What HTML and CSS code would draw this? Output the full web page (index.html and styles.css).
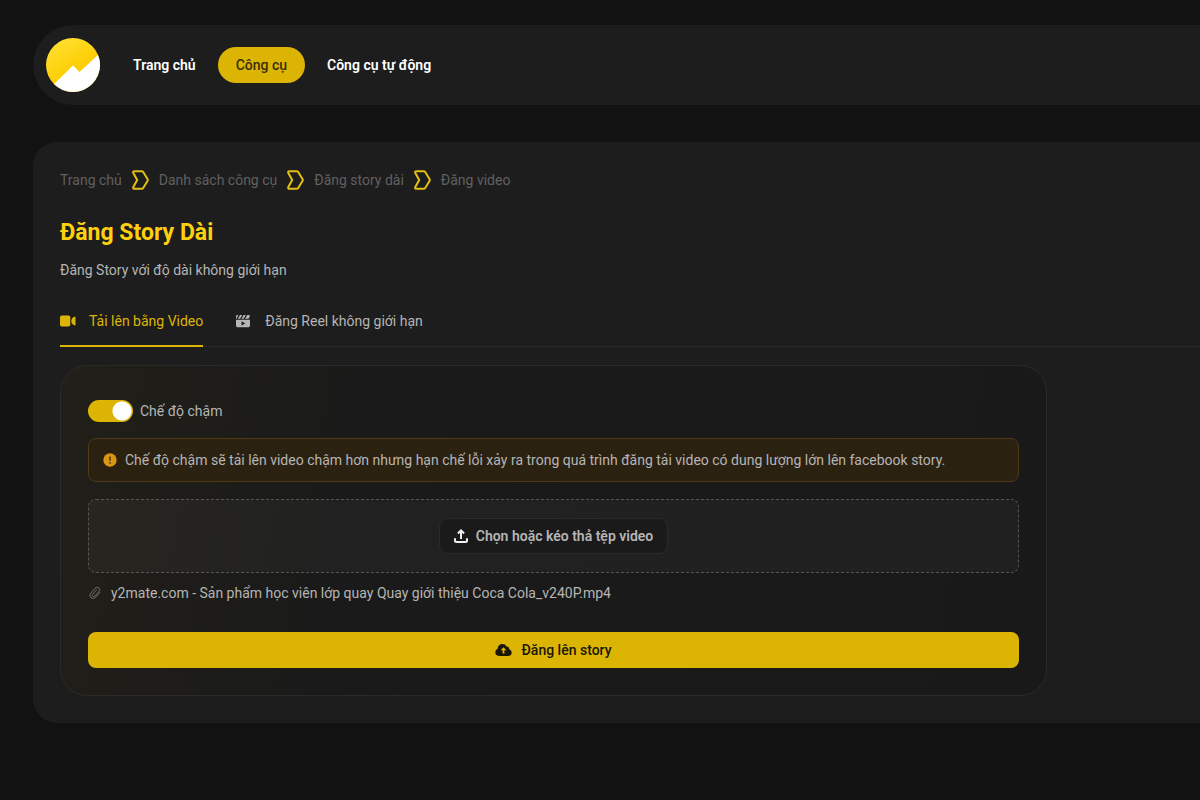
FILE: index.html
```html
<!DOCTYPE html>
<html lang="vi">
<head>
<meta charset="utf-8">
<meta name="viewport" content="width=device-width, initial-scale=1">
<title>Đăng Story Dài</title>
<link rel="stylesheet" href="styles.css">
</head>
<body>
<header class="header">
  <a class="logo" href="#" aria-label="Logo">
    <svg viewBox="0 0 54 54" width="54" height="54">
      <defs>
        <linearGradient id="gold" x1="0" y1="0" x2="0.6" y2="1"><stop offset="0" stop-color="#ffe53b"/><stop offset="0.6" stop-color="#fdd009"/><stop offset="1" stop-color="#f8c400"/></linearGradient>
        <clipPath id="round"><circle cx="27" cy="27" r="27"/></clipPath>
      </defs>
      <g clip-path="url(#round)">
        <path fill="url(#gold)" d="M0 0h54v54H0z"/>
        <path fill="#fff" d="M7 47 27 27.500l6.500 6.500L54 15v39H7z"/>
      </g>
    </svg>
  </a>
  <nav class="nav">
    <a class="nav-link" href="#">Trang chủ</a>
    <a class="nav-link nav-active" href="#">Công cụ</a>
    <a class="nav-link" href="#">Công cụ tự động</a>
  </nav>
</header>
<main class="panel">
  <nav class="crumbs" aria-label="Breadcrumb">
    <a href="#">Trang chủ</a>
    <svg class="sep" viewBox="0 0 17 20"><path d="M2.500 1.200h7.200q1 0 1.500.8l4.300 7q.6 1 0 2l-4.300 7q-.5.800-1.500.8H2.500q-1.800 0-1.200-1.700L5.200 10 1.300 2.900Q.7 1.200 2.500 1.200z"/></svg>
    <a href="#">Danh sách công cụ</a>
    <svg class="sep" viewBox="0 0 17 20"><path d="M2.500 1.200h7.200q1 0 1.500.8l4.300 7q.6 1 0 2l-4.300 7q-.5.800-1.500.8H2.500q-1.800 0-1.200-1.700L5.200 10 1.300 2.900Q.7 1.200 2.500 1.200z"/></svg>
    <a href="#">Đăng story dài</a>
    <svg class="sep" viewBox="0 0 17 20"><path d="M2.500 1.200h7.200q1 0 1.500.8l4.300 7q.6 1 0 2l-4.300 7q-.5.800-1.500.8H2.500q-1.800 0-1.200-1.700L5.200 10 1.300 2.900Q.7 1.200 2.500 1.200z"/></svg>
    <a href="#">Đăng video</a>
  </nav>
  <h1 class="title">Đăng Story Dài</h1>
  <p class="desc">Đăng Story với độ dài không giới hạn</p>
  <div class="tabs" role="tablist">
    <button class="tab tab-active" type="button" role="tab" aria-selected="true">
      <svg class="icon" viewBox="0 0 16 16"><rect x="0" y="2.500" width="10.300" height="11" rx="1.800"/><path d="M15.500 4.500v7q0 1.300-1.200.8Q11.300 11 11.300 8t3-4.300q1.200-.5 1.200.8z"/></svg>
      Tải lên bằng Video
    </button>
    <button class="tab" type="button" role="tab" aria-selected="false">
      <svg class="icon" viewBox="0 0 16 16"><path d="M0 5.700V3.400Q0 2 1.400 2h1L.5 5.700zM1.900 5.700 4 2h2.200L4.100 5.700zM5.500 5.700 7.600 2h2.200L7.700 5.700zM9.100 5.700 11.200 2h1.400q1.200 0 1.400 1L12.500 5.700z"/><path fill-rule="evenodd" d="M0 6.700h14v6.100q0 1.400-1.400 1.400H1.400Q0 14.200 0 12.800zm5.500 1.500v4.400l3.800-2.200z"/></svg>
      Đăng Reel không giới hạn
    </button>
  </div>
  <form class="card">
    <label class="switch-row">
      <input class="switch" type="checkbox" role="switch" checked>
      <span>Chế độ chậm</span>
    </label>
    <div class="alert" role="alert">
      <svg class="icon-alert" viewBox="0 0 14 14"><circle cx="7" cy="7" r="6.700" fill="#d89614"/><path d="M7 3.500v4.200M7 9.200v1.500" stroke="#2b2111" stroke-width="1.300"/></svg>
      <span>Chế độ chậm sẽ tải lên video chậm hơn nhưng hạn chế lỗi xảy ra trong quá trình đăng tải video có dung lượng lớn lên facebook story.</span>
    </div>
    <div class="drop">
      <button class="choose" type="button">
        <svg class="icon-upload" viewBox="0 0 14 14"><path d="M7 10V1.700M3.900 4.500 7 1.400l3.100 3.100M1 9.300v2.200q0 1.500 1.500 1.500h9q1.500 0 1.500-1.500V9.300"/></svg>
        Chọn hoặc kéo thả tệp video
      </button>
    </div>
    <div class="file">
      <svg class="icon-clip" viewBox="0 0 14 14"><path d="M12 6.200 7.600 11.300Q5.500 13.500 3.200 12 .9 10.200 2.400 7.800L7 2.300Q8.700.6 10.700 1.700q1.900 1.500.5 3.500L6.800 10.200q-.9.900-2 .2-1-.9-.2-2L8.700 3.700"/></svg>
      <span>y2mate.com - Sản phẩm học viên lớp quay Quay giới thiệu Coca Cola_v240P.mp4</span>
    </div>
    <button class="submit" type="submit">
      <svg class="icon-cloud" viewBox="0 0 17 14"><path fill-rule="evenodd" d="M4.100 13Q.3 12.700.3 9.300.3 6.700 2.600 5.800 3 1 7.500 1q2.700 0 4 2.400 2.600 0 2.800 2.800 2.400.8 2.400 3.300 0 3.300-3.700 3.500zM7.600 10.500h1.800V7.300h2L8.500 4.200 5.600 7.300h2z"/></svg>
      Đăng lên story
    </button>
  </form>
</main>
</body>
</html>
```
FILE: styles.css
```css
* { box-sizing: border-box; }
body {
  margin: 0;
  padding: 25px 0 0 33px;
  background: #121212;
  color: #b5b5b5;
  font: 14px/20px Roboto, "Liberation Sans", sans-serif;
}
a { color: inherit; text-decoration: none; }
button { font: inherit; color: inherit; cursor: pointer; }
svg { flex: none; }
.header {
  display: flex;
  align-items: center;
  gap: 15px;
  padding: 13px;
  background: #1d1d1d;
  border-radius: 40px 0 0 40px;
}
.logo, .logo svg { display: block; }
.nav { display: flex; gap: 4px; }
.nav-link {
  padding: 8px 18px;
  border-radius: 18px;
  color: #fff;
  font-weight: 600;
}
.nav-active { background: #dcb504; color: #3a2e05; font-weight: 500; }
.panel {
  margin-top: 37px;
  padding: 27px 0 27px 27px;
  background: #1d1d1d;
  border-radius: 24px 0 0 24px;
}
.crumbs {
  display: flex;
  align-items: center;
  gap: 10px;
  height: 22px;
  color: #606060;
}
.sep {
  width: 17px;
  height: 20px;
  fill: none;
  stroke: #e3bf12;
  stroke-width: 2;
  stroke-linejoin: round;
}
.title {
  margin: 28px 0 0;
  color: #fdd00f;
  font-size: 23px;
  line-height: 28px;
  font-weight: 700;
}
.desc { margin: 13px 0 0; }
.tabs {
  display: flex;
  gap: 33px;
  margin-top: 30px;
  border-bottom: 1px solid #292929;
}
.tab {
  display: flex;
  align-items: center;
  gap: 13px;
  margin-bottom: -1px;
  padding: 1px 0 14px;
  border: 0;
  border-bottom: 2px solid transparent;
  background: none;
}
.tab-active { color: #dcb504; border-color: #dcb504; }
.icon { width: 16px; height: 16px; fill: currentColor; }
.card {
  display: flex;
  flex-direction: column;
  max-width: 987px;
  margin-top: 18px;
  padding: 33px 27px 27px;
  border: 1px solid #2a2a2a;
  border-radius: 27px;
  background: linear-gradient(100deg, #211f18 0%, #1a1a1a 30%, #191919 100%);
}
.switch-row { display: flex; align-items: center; gap: 7px; align-self: flex-start; height: 23px; }
.switch {
  appearance: none;
  width: 45px;
  height: 22px;
  margin: 0;
  border-radius: 11px;
  background: radial-gradient(circle at 34px 11px, #fff 9px, transparent 10px) #dcb504;
}
.alert {
  display: flex;
  align-items: center;
  gap: 8px;
  margin-top: 16px;
  padding: 11px 14px;
  border: 1px solid #4f3916;
  border-radius: 8px;
  background: #2b2111;
}
.icon-alert, .icon-upload, .icon-clip { width: 14px; height: 14px; }
.drop {
  display: flex;
  justify-content: center;
  margin-top: 17px;
  padding: 18px;
  border: 1px dashed #545454;
  border-radius: 8px;
  background: rgba(255, 255, 255, 0.03);
}
.choose {
  display: flex;
  align-items: center;
  gap: 8px;
  padding: 7px 14px;
  border: 1px solid #2b2b2b;
  border-radius: 9px;
  background: #1a1a1a;
  font-weight: 600;
}
.icon-upload { fill: none; stroke: #f0f0f0; stroke-width: 2; }
.file { display: flex; align-items: center; gap: 9px; margin-top: 10px; }
.icon-clip { fill: none; stroke: #707070; stroke-width: 1; }
.submit {
  display: flex;
  align-items: center;
  justify-content: center;
  gap: 9px;
  margin-top: 29px;
  padding: 8px;
  border: 0;
  border-radius: 8px;
  background: #dcb504;
  color: #1b1603;
  font-weight: 500;
}
.icon-cloud { width: 17px; height: 14px; fill: currentColor; }
```
